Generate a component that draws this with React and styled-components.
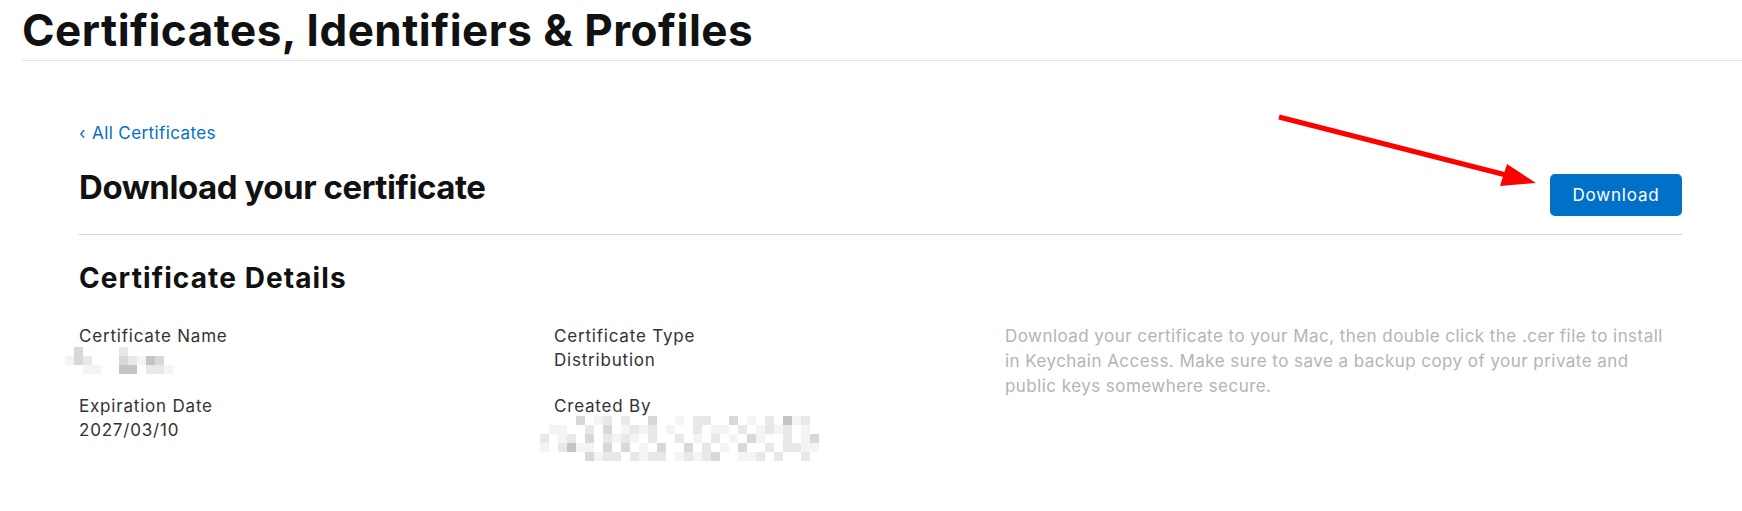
import React from 'react';
import styled, { createGlobalStyle } from 'styled-components';

const GlobalStyle = createGlobalStyle`
  html, body { margin: 0; padding: 0; background: #ffffff; }
  body {
    font-family: Inter, "Liberation Sans", Arial, sans-serif;
    -webkit-font-smoothing: antialiased;
  }
  * { box-sizing: border-box; }
`;

const Page = styled.div`
  position: relative;
  width: 1742px;
  height: 511px;
  overflow: hidden;
  background: #fff;
`;

const Header = styled.header`
  margin-left: 22px;
  height: 61px;
  border-bottom: 1px solid #e3e3e3;
`;

const SiteTitle = styled.h1`
  margin: 0;
  padding-top: 4px;
  font-size: 44px;
  line-height: 52px;
  font-weight: 700;
  letter-spacing: 0.5px;
  color: #111111;
`;

const Main = styled.main`
  padding: 0 60px 0 79px;
`;

const BackLink = styled.a`
  display: block;
  margin-top: 60px;
  font-size: 17px;
  line-height: 24px;
  letter-spacing: 0.4px;
  color: #0070c9;
  text-decoration: none;
`;

const Chevron = styled.span`
  display: inline-block;
  width: 13px;
`;

const TitleRow = styled.div`
  display: flex;
  justify-content: space-between;
  align-items: flex-start;
  margin-top: 22px;
  padding-bottom: 18px;
  border-bottom: 1px solid #d6d6d6;
`;

const PageTitle = styled.h2`
  margin: 0;
  font-size: 33px;
  line-height: 40px;
  font-weight: 700;
  letter-spacing: -0.45px;
  color: #111111;
`;

const PrimaryButton = styled.button`
  margin-top: ${(p) => p.$offset || 0}px;
  width: 132px;
  height: 42px;
  border: none;
  border-radius: 5px;
  background: #0070c9;
  color: #ffffff;
  font-family: inherit;
  font-size: 17px;
  letter-spacing: 0.8px;
  cursor: pointer;
`;

const SectionTitle = styled.h3`
  margin: 26px 0 0;
  font-size: 28px;
  line-height: 34px;
  font-weight: 700;
  letter-spacing: 1.1px;
  color: #111111;
`;

const DetailsGrid = styled.div`
  display: grid;
  grid-template-columns: 475px 451px 1fr;
  margin-top: 29px;
`;

const Column = styled.div`
  display: flex;
  flex-direction: column;
  gap: 22px;
`;

const Field = styled.div`
  display: flex;
  flex-direction: column;
`;

const Label = styled.div`
  font-size: 17px;
  line-height: 24px;
  letter-spacing: 0.8px;
  color: #333333;
`;

const Value = styled.div`
  height: 24px;
  font-size: 17px;
  line-height: 24px;
  letter-spacing: 0.8px;
  color: #333333;
`;

const Mosaic = styled.svg`
  display: block;
  margin-left: ${(p) => p.$dx}px;
  margin-top: ${(p) => p.$dy}px;
`;

const Description = styled.p`
  margin: 0;
  font-size: 17px;
  line-height: 25px;
  letter-spacing: 0.45px;
  color: #b4b4b4;
`;

const ArrowLayer = styled.svg`
  position: absolute;
  left: 0;
  top: 0;
  pointer-events: none;
`;

const SHADES = {
  '1': '#f4f4f4',
  '2': '#e8e8e8',
  '3': '#d8d8d8',
  '4': '#c4c4c4',
  '5': '#adadad',
};

function Pixelated({ rows, cell = 9, dx = 0, dy = 0 }) {
  const cols = Math.max(...rows.map((r) => r.length));
  return (
    <Mosaic
      $dx={dx}
      $dy={dy}
      width={cols * cell}
      height={rows.length * cell}
      viewBox={`0 0 ${cols * cell} ${rows.length * cell}`}
    >
      {rows.map((row, y) =>
        row.split('').map((ch, x) =>
          SHADES[ch] ? (
            <rect key={`${x}-${y}`} x={x * cell} y={y * cell} width={cell} height={cell} fill={SHADES[ch]} />
          ) : null
        )
      )}
    </Mosaic>
  );
}

const nameRows = [
  '.3....2.....',
  '132...32143.',
  '..11..44.221',
];

const creatorRows = [
  '....3.12.2..3..1.22..3.1.2.412.',
  '.11..2.3.1212.1..2.11.2.1212.1.',
  '2.12.3.2121.2..2.1.2.1.31..2.13',
  '1.2411.3.3.1.3..3.2.1.3..2.2211',
  '.....3122.2122.12123..112.2..2.',
];

export default function App() {
  return (
    <Page>
      <GlobalStyle />
      <Header>
        <SiteTitle>Certificates, Identifiers &amp; Profiles</SiteTitle>
      </Header>
      <Main>
        <BackLink href="#">
          <Chevron>‹</Chevron>All Certificates
        </BackLink>
        <TitleRow>
          <PageTitle>Download your certificate</PageTitle>
          <PrimaryButton $offset={7}>Download</PrimaryButton>
        </TitleRow>
        <SectionTitle>Certificate Details</SectionTitle>
        <DetailsGrid>
          <Column>
            <Field>
              <Label>Certificate Name</Label>
              <Value>
                <Pixelated rows={nameRows} dx={-14} dy={-1} />
              </Value>
            </Field>
            <Field>
              <Label>Expiration Date</Label>
              <Value>2027/03/10</Value>
            </Field>
          </Column>
          <Column>
            <Field>
              <Label>Certificate Type</Label>
              <Value>Distribution</Value>
            </Field>
            <Field>
              <Label>Created By</Label>
              <Value>
                <Pixelated rows={creatorRows} dx={-14} dy={-2} />
              </Value>
            </Field>
          </Column>
          <Description>
            Download your certificate to your Mac, then double click the .cer file to install
            <br />
            in Keychain Access. Make sure to save a backup copy of your private and
            <br />
            public keys somewhere secure.
          </Description>
        </DetailsGrid>
      </Main>
      <ArrowLayer width="1742" height="511" viewBox="0 0 1742 511">
        <line x1="1279" y1="117" x2="1506" y2="175" stroke="#ff0000" strokeWidth="5" />
        <polygon points="1536,183 1500,186 1507,164" fill="#ff0000" />
      </ArrowLayer>
    </Page>
  );
}
